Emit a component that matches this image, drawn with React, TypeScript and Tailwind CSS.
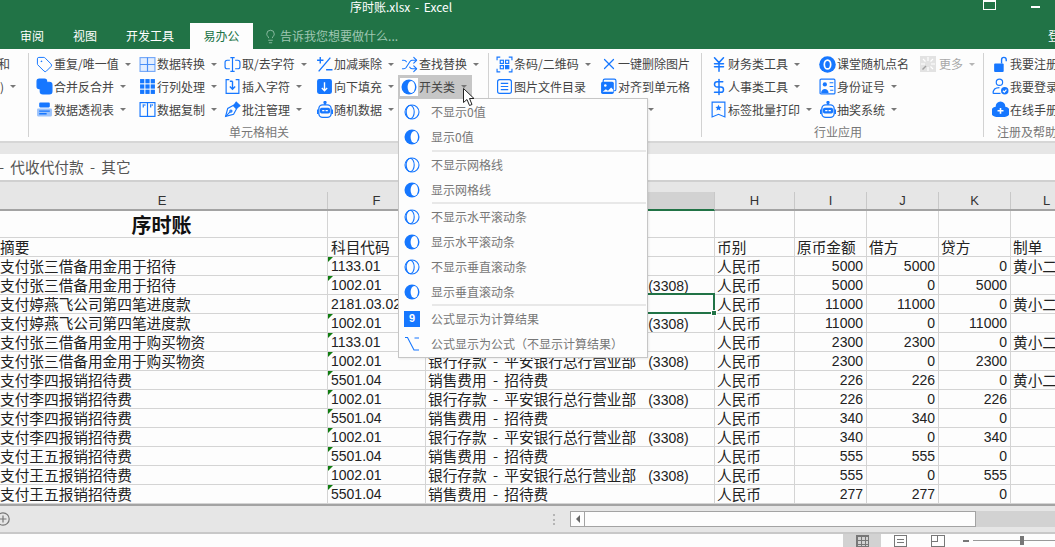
import type { ReactNode } from "react";
import { DollarSign, JapaneseYen, Lightbulb, Shuffle, Tag, X } from "lucide-react";

const blue = "#1677ff";

function Svg({ children }: { children: ReactNode }) {
  return (
    <svg width="17" height="17" viewBox="0 0 16 16" fill="none" stroke={blue} strokeWidth="1.1">
      {children}
    </svg>
  );
}

// switch icons used by the 开关类 button and its menu
const ToggleOn = () => (
  <svg width="16" height="16" viewBox="0 0 16 16">
    <circle cx="8" cy="8" r="7.5" fill={blue} />
    <ellipse cx="10.300" cy="8" rx="3.700" ry="6" fill="#fff" />
  </svg>
);
const ToggleOff = () => (
  <svg width="16" height="16" viewBox="0 0 16 16" fill="none" stroke={blue} strokeWidth="1.1">
    <circle cx="8" cy="8" r="7" />
    <ellipse cx="6.200" cy="8" rx="4" ry="6.700" />
  </svg>
);

const Robot = () => (
  <svg width="18" height="18" viewBox="0 0 16 16" fill="none" stroke={blue} strokeWidth="1.2">
    <circle cx="8" cy="1.400" r=".9" fill={blue} />
    <path d="M8 2v1.500M1.500 7.500v4M14.500 7.500v4" />
    <rect x="2.500" y="3.500" width="11" height="11" rx="3.500" />
    <rect x="3.500" y="6" width="9" height="5" rx="1.500" fill={blue} stroke="none" />
    <path d="M5.500 8.500h2M8.500 8.500h2" stroke="#fff" />
  </svg>
);

const icons: Record<string, ReactNode> = {
  tag: <Tag size={17} color={blue} strokeWidth={1.4} />,
  merge: (
    <Svg>
      <rect x="1" y="1" width="9" height="9" rx="2" fill={blue} />
      <rect x="4" y="4" width="11" height="11" rx="2.500" fill={blue} />
    </Svg>
  ),
  pivot: (
    <Svg>
      <rect x="3" y="1.500" width="10" height="4.500" rx="1" fill={blue} stroke="none" />
      <rect x="1" y="7" width="14" height="7.500" rx="1" fill="#9cc3fb" stroke="none" />
      <path d="M3 9.500h10M3 12h7" stroke={blue} strokeWidth="1.200" />
    </Svg>
  ),
  table: (
    <Svg>
      <rect x="1" y="1.500" width="14" height="13" fill="#e3eeff" stroke="#76a9f8" />
      <path d="M8 1.500v13M1 8h14" stroke="#4a8ff7" />
    </Svg>
  ),
  grid: (
    <Svg>
      {[1, 6, 11].flatMap((x) =>
        [1, 6, 11].map((y) => <rect key={`${x}-${y}`} x={x} y={y} width="4" height="4" fill={blue} stroke="none" />)
      )}
    </Svg>
  ),
  columns: (
    <Svg>
      <rect x="1" y="1.500" width="14" height="13" />
      <path d="M8 1.500v13M4 3v3M5.500 3v1.500M11 3v3M12.500 3v1.500" />
    </Svg>
  ),
  cursor: (
    <Svg>
      <path d="M6 1.500h4M6 14.500h4M8 1.500v13" />
      <path d="M5.500 4H3a2 2 0 0 0-2 2v4a2 2 0 0 0 2 2h2.500M10.500 4H13a2 2 0 0 1 2 2v4a2 2 0 0 1-2 2h-2.500" />
    </Svg>
  ),
  insert: (
    <Svg>
      <path d="M5 1.500H2v13h12v-13h-3" />
      <path d="M8 3v7M5.500 8 8 10.500 10.500 8M5.500 3H8" strokeWidth="1.300" />
    </Svg>
  ),
  pen: (
    <Svg>
      <path d="M9 4.500 11.500 1 15 4.500 11.500 7z" fill={blue} />
      <path d="M9 4 3.500 7 1.500 14.500 9 12.500l3-5.500z" />
      <path d="M1.500 14.500 6 10" />
      <circle cx="6.500" cy="9.500" r="1" />
    </Svg>
  ),
  calc: (
    <Svg>
      <path d="M1 4h6M4 1v6M13.500 1.500 2.500 14.500M9.500 13h6" strokeWidth="1.300" />
    </Svg>
  ),
  fill: (
    <Svg>
      <rect x="1" y="1" width="14" height="14" rx="2" fill={blue} stroke="none" />
      <path d="M8 4v8M5.500 9.500 8 12l2.500-2.500" stroke="#fff" strokeWidth="1.300" />
    </Svg>
  ),
  robot: <Robot />,
  shuffle: <Shuffle size={17} color={blue} strokeWidth={1.5} />,
  toggle: (
    <span className="-ml-[1px] flex h-[18px] w-[18px] items-center justify-center bg-white">
      <ToggleOn />
    </span>
  ),
  qr: (
    <Svg>
      <path d="M1 4V1h3M12 1h3v3M15 12v3h-3M4 15H1v-3" />
      <rect x="4" y="4" width="3" height="3" />
      <rect x="9" y="4" width="3" height="3" />
      <rect x="4" y="9" width="3" height="3" />
      <path d="M9 9h3v3H9z" fill={blue} />
    </Svg>
  ),
  list: (
    <Svg>
      <rect x="1.500" y="1.500" width="13" height="13" rx="2" />
      <path d="M4.500 5h7M4.500 8h7M4.500 11h7" />
    </Svg>
  ),
  x: <X size={18} color={blue} strokeWidth={1.6} />,
  image: (
    <Svg>
      <rect x="3" y="1" width="12" height="11" rx="1.500" />
      <rect x="1" y="3.500" width="12" height="11.500" rx="1.500" fill={blue} stroke="none" />
      <circle cx="5" cy="7" r="1.200" fill="#fff" stroke="none" />
      <path d="m2.500 13 3-2.500 2 1.500 3-3 2 2v2z" fill="#fff" stroke="none" />
    </Svg>
  ),
  yen: <JapaneseYen size={19} color={blue} strokeWidth={2} />,
  dollar: <DollarSign size={18} color={blue} strokeWidth={2} />,
  ribbon: (
    <Svg>
      <path d="M2 1h12v14l-6-2.500L2 15z" />
      <path d="m8 3.500.9 1.900 2 .2-1.500 1.400.4 2L8 8.100 6.200 9l.4-2-1.500-1.400 2-.2z" fill={blue} stroke="none" />
    </Svg>
  ),
  ring: (
    <svg width="17" height="17" viewBox="0 0 16 16">
      <circle cx="8" cy="8" r="7.800" fill={blue} />
      <ellipse cx="8" cy="8" rx="3" ry="4.200" fill="none" stroke="#fff" strokeWidth="1.600" />
    </svg>
  ),
  card: (
    <Svg>
      <rect x="1" y="1" width="14" height="14" rx="1" />
      <circle cx="5.500" cy="6" r="2" fill={blue} stroke="none" />
      <path d="M2 14c0-5 7-5 7 0z" fill={blue} stroke="none" />
      <path d="M10 4.500h3.500M10 8h3.500M10.500 11.500h3" />
    </Svg>
  ),
  more: (
    <svg width="16" height="16" viewBox="0 0 16 16" stroke="#fff" strokeWidth="1.200">
      <rect width="16" height="16" fill="#e2e2e2" stroke="none" />
      <path d="M8 1v4M8 11v4M1 8h4M11 8h4M3 3l2.500 2.500M13 3l-2.500 2.500M13 13l-2.500-2.500" />
      <path d="M2.500 13.500 6 10" stroke="#a0a0a0" strokeWidth="1.400" />
    </svg>
  ),
  lock: (
    <Svg>
      <rect x="2" y="7" width="9" height="8" rx="1" fill={blue} stroke="none" />
      <path d="M9 7V3.500a2.200 2.200 0 0 1 4.400 0V5" strokeWidth="1.300" />
    </Svg>
  ),
  user: (
    <Svg>
      <circle cx="7" cy="4" r="3" />
      <path d="M1 14.500c0-3.500 2.500-5.500 6-5.500" />
      <path d="M1 14.500h7" />
      <circle cx="12" cy="12" r="3.500" fill={blue} stroke="none" />
      <path d="m10.300 12 1.300 1.300 2-2.300" stroke="#fff" />
    </Svg>
  ),
  cloud: (
    <Svg>
      <path d="M8 .5a4.500 4.500 0 0 1 4.500 4.800A4.800 4.800 0 0 1 11.500 15h-7A4.800 4.800 0 0 1 3.500 5.300 4.500 4.500 0 0 1 8 .5z" fill={blue} stroke="none" />
      <path d="M8 6.500v5.500M5.200 9.200h5.600" stroke="#fff" strokeWidth="1.500" />
    </Svg>
  ),
};

function Caret({ color = "#777" }: { color?: string }) {
  return (
    <span
      className="ml-[6px] h-0 w-0 border-x-[3px] border-t-[3px] border-x-transparent"
      style={{ borderTopColor: color }}
    />
  );
}

function Tool({
  icon,
  label,
  caret,
  active,
  muted,
}: {
  icon: string;
  label: string;
  caret?: boolean;
  active?: boolean;
  muted?: boolean;
}) {
  return (
    <div
      className={`flex items-center whitespace-nowrap pl-[3px] text-[12px] ${
        active ? "w-[74px] bg-[#c6c6c6]" : ""
      } ${muted ? "text-[#a8a8a8]" : "text-[#444]"}`}
    >
      <span className="flex w-[18px] shrink-0 items-center justify-start">{icons[icon]}</span>
      <span className={muted ? "ml-[1px]" : ""}>{label}</span>
      {caret && <Caret color={muted ? "#b5b5b5" : "#777"} />}
    </div>
  );
}

type ToolDef = [string, string, boolean?];

function Group({
  width,
  left,
  cols,
  tools,
  label,
  labelLeft,
}: {
  width: string;
  left: string;
  cols: string;
  tools: ToolDef[];
  label: string;
  labelLeft: string;
}) {
  return (
    <div className={`flex h-full shrink-0 flex-col border-r border-[#d2d2d2] ${width} ${left}`}>
      <div className={`grid h-[68px] grid-flow-col grid-rows-[22px_23px_23px] ${cols}`}>
        {tools.map(([icon, text, caret]) => (
          <Tool
            key={text}
            icon={icon}
            label={text}
            caret={caret}
            active={icon === "toggle"}
            muted={icon === "more"}
          />
        ))}
      </div>
      <div className={`whitespace-nowrap pt-[3px] text-[12px] leading-[16px] text-[#777] ${labelLeft}`}>{label}</div>
    </div>
  );
}

const menuGroups: [string, string][][] = [
  [
    ["off", "不显示0值"],
    ["on", "显示0值"],
  ],
  [
    ["off", "不显示网格线"],
    ["on", "显示网格线"],
  ],
  [
    ["off", "不显示水平滚动条"],
    ["on", "显示水平滚动条"],
    ["off", "不显示垂直滚动条"],
    ["on", "显示垂直滚动条"],
  ],
  [
    ["nine", "公式显示为计算结果"],
    ["formula", "公式显示为公式（不显示计算结果）"],
  ],
];

function MenuIcon({ kind }: { kind: string }) {
  if (kind === "on") return <ToggleOn />;
  if (kind === "off") return <ToggleOff />;
  if (kind === "nine")
    return (
      <span className="flex h-[16px] w-[16px] items-center justify-center bg-[#1677ff] font-['Liberation_Sans',sans-serif] text-[11px] font-bold text-white">
        9
      </span>
    );
  return (
    <svg width="16" height="16" viewBox="0 0 16 16" fill="none" stroke={blue} strokeWidth="1.100">
      <path d="M1 1.500h2.500L10 14h5M10.500 2h4.500" />
    </svg>
  );
}

function SwitchMenu() {
  return (
    <div className="absolute left-[398px] top-[98px] h-[260px] w-[250px] border border-[#c6c6c6] bg-[#fdfdfd] text-[12px] text-[#777] shadow-[1px_1px_2px_rgba(0,0,0,0.08)]">
      {menuGroups.map((items, i) => (
        <div
          key={i}
          className={`${i > 0 ? "ml-[33px] mr-px border-t-2 border-[#e8e8e8]" : ""} ${i === 1 ? "mt-px" : ""}`}
        >
          {items.map(([kind, text]) => (
            <div key={text} className={`flex h-[25px] items-center whitespace-nowrap ${i > 0 ? "-ml-[33px]" : ""}`}>
              <span className="ml-[5px] flex w-[27px] shrink-0">
                <MenuIcon kind={kind} />
              </span>
              {text}
            </div>
          ))}
        </div>
      ))}
    </div>
  );
}

const colGrid = "grid grid-cols-[328px_98px_289px_80px_72px_72px_72px_72px]";
const headers = ["E", "F", "G", "H", "I", "J", "K", "L"];

const bank = "银行存款 - 平安银行总行营业部";
const sales = "销售费用 - 招待费";

type RowDef = [string, string, string, boolean, number, number, number, boolean];

const rows: RowDef[] = [
  ["支付张三借备用金用于招待", "1133.01", "其他应收款 - 张三", false, 5000, 5000, 0, true],
  ["支付张三借备用金用于招待", "1002.01", bank, true, 5000, 0, 5000, false],
  ["支付婷燕飞公司第四笔进度款", "2181.03.02", "", false, 11000, 11000, 0, true],
  ["支付婷燕飞公司第四笔进度款", "1002.01", bank, true, 11000, 0, 11000, false],
  ["支付张三借备用金用于购买物资", "1133.01", "其他应收款 - 张三", false, 2300, 2300, 0, true],
  ["支付张三借备用金用于购买物资", "1002.01", bank, true, 2300, 0, 2300, false],
  ["支付李四报销招待费", "5501.04", sales, false, 226, 226, 0, true],
  ["支付李四报销招待费", "1002.01", bank, true, 226, 0, 226, false],
  ["支付李四报销招待费", "5501.04", sales, false, 340, 340, 0, false],
  ["支付李四报销招待费", "1002.01", bank, true, 340, 0, 340, false],
  ["支付王五报销招待费", "5501.04", sales, false, 555, 555, 0, false],
  ["支付王五报销招待费", "1002.01", bank, true, 555, 0, 555, false],
  ["支付王五报销招待费", "5501.04", sales, false, 277, 277, 0, false],
];

const cell = "overflow-hidden whitespace-nowrap border-r border-b border-[#d4d4d4]";
const cjk = "text-[14.67px] leading-[18px]";
const latin = "font-['Liberation_Sans',sans-serif] text-[14px] leading-[18px]";

function Num({ value }: { value: number }) {
  return <div className={`${cell} ${latin} pr-[3px] text-right`}>{value}</div>;
}

function SheetRow({ row, index }: { row: RowDef; index: number }) {
  const [memo, code, account, suffix, amount, debit, credit, maker] = row;
  return (
    <div className={`${colGrid} h-[19px] text-[#222]`}>
      <div className={`${cell} ${cjk}`}>{memo}</div>
      <div className={`${cell} ${latin} relative pl-[3px]`}>
        {index !== 2 && (
          <span className="absolute left-0 top-0 h-0 w-0 border-r-[5px] border-t-[5px] border-r-transparent border-t-[#107c10]" />
        )}
        {code}
      </div>
      <div className={`${cell} ${cjk} ${index === 2 ? "relative overflow-visible" : ""} pl-[2px] [word-spacing:3px]`}>
        {account}
        {suffix && <span className={`${latin} ml-[12px]`}>(3308)</span>}
        {index === 2 && (
          <>
            <span className="absolute -left-px -top-[2px] bottom-[-1px] right-[-1px] border-2 border-[#217346]" />
            <span className="absolute bottom-[-3px] right-[-3px] h-[6px] w-[6px] border border-white bg-[#217346]" />
          </>
        )}
      </div>
      <div className={`${cell} ${cjk} pl-[2px]`}>人民币</div>
      <Num value={amount} />
      <Num value={debit} />
      <Num value={credit} />
      <div className={`${cell} ${cjk} pl-[2px]`}>{maker ? "黄小二" : ""}</div>
    </div>
  );
}

export default function App() {
  return (
    <div className="relative h-[547px] w-[1055px] overflow-hidden bg-[#fdfdfd] font-['Noto_Sans_CJK_SC',sans-serif]">
      {/* Title bar + tabs */}
      <div className="h-[49px] bg-[#217346] text-[12px] text-white">
        <div className="flex h-[23px]">
          <div className="ml-[350px] w-[103px] whitespace-nowrap leading-[14px] [word-spacing:2px]">序时账.xlsx - Excel</div>
          <div className="ml-[530px] h-[10px] w-[13px] border border-t-2 border-white" />
          <div className="ml-[35px] mt-[6px] h-[2px] w-[9px] bg-white" />
        </div>
        <div className="flex h-[26px] items-center">
          <div className="ml-[20px]">审阅</div>
          <div className="ml-[29px]">视图</div>
          <div className="ml-[29px]">开发工具</div>
          <div className="ml-[16px] flex h-full w-[63px] items-center justify-center bg-[#fdfdfd] text-[#217346]">
            易办公
          </div>
          <div className="ml-[10px] flex items-center text-[#9fc7b2]">
            <Lightbulb size={15} strokeWidth={1.3} />
            <span className="ml-[2px]">告诉我您想要做什么...</span>
          </div>
          <div className="ml-auto w-[7px] overflow-hidden whitespace-nowrap">登录</div>
        </div>
      </div>

      {/* Ribbon */}
      <div className="flex h-[94px] overflow-hidden border-b-2 border-[#d6d6d6] bg-[#fdfdfd] py-[4px]">
        <div className="h-full w-[29px] shrink-0 overflow-hidden border-r border-[#d2d2d2] text-[12px] text-[#444]">
          <div className="flex h-[22px] items-center justify-end whitespace-nowrap pr-[18px]">求和</div>
          <div className="flex h-[23px] items-center justify-end whitespace-nowrap pr-[12px]">
            表)
            <Caret />
          </div>
        </div>
        <Group
          width="w-[460px]"
          left="pl-[4px]"
          cols="grid-cols-[103px_85px_92px_85px_74px]"
          label="单元格相关"
          labelLeft="pl-[196px]"
          tools={[
            ["tag", "重复/唯一值", true],
            ["merge", "合并反合并", true],
            ["pivot", "数据透视表", true],
            ["table", "数据转换", true],
            ["grid", "行列处理", true],
            ["columns", "数据复制", true],
            ["cursor", "取/去字符", true],
            ["insert", "插入字符", true],
            ["pen", "批注管理", true],
            ["calc", "加减乘除", true],
            ["fill", "向下填充", true],
            ["robot", "随机数据", true],
            ["shuffle", "查找替换", true],
            ["toggle", "开关类", true],
          ]}
        />
        <Group
          width="w-[213px]"
          left="pl-[4px]"
          cols="grid-cols-[104px_104px]"
          label=""
          labelLeft=""
          tools={[
            ["qr", "条码/二维码", true],
            ["list", "图片文件目录"],
            ["list", "批量导入图片"],
            ["x", "一键删除图片"],
            ["image", "对齐到单元格"],
            ["image", "图片", true],
          ]}
        />
        <Group
          width="w-[282px]"
          left="pl-[5px]"
          cols="grid-cols-[109px_101px_70px]"
          label="行业应用"
          labelLeft="pl-[107px]"
          tools={[
            ["yen", "财务类工具", true],
            ["dollar", "人事类工具", true],
            ["ribbon", "标签批量打印", true],
            ["ring", "课堂随机点名"],
            ["card", "身份证号", true],
            ["robot", "抽奖系统", true],
            ["more", "更多", true],
          ]}
        />
        <div className="w-[72px] shrink-0 pl-[5px]">
          <div className="grid h-[68px] grid-rows-[22px_23px_23px]">
            <Tool icon="lock" label="我要注册" />
            <Tool icon="user" label="我要登录" />
            <Tool icon="cloud" label="在线手册" />
          </div>
          <div className="whitespace-nowrap pl-[8px] pt-[3px] text-[12px] leading-[16px] text-[#777]">注册及帮助</div>
        </div>
      </div>

      {/* Formula bar */}
      <div className="h-[11px] bg-[#e6e6e6]" />
      <div className="h-[28px] border-b-2 border-[#d0d0d0] bg-[#fdfdfd] -indent-[1px] text-[14.67px] leading-[26px] text-[#555] [word-spacing:3px]">
        - 代收代付款 - 其它
      </div>
      <div className="h-[10px] bg-[#e6e6e6]" />

      {/* Column letters */}
      <div className={`${colGrid} h-[19px] border-b-2 border-[#a3a3a3] bg-[#e6e6e6]`}>
        {headers.map((h) => (
          <div
            key={h}
            className={`border-r border-[#c8c8c8] text-center font-['Liberation_Sans',sans-serif] text-[13px] leading-[17px] text-[#333] ${
              h === "G" ? "-mb-[2px] border-b-2 border-b-[#217346] bg-[#d2d2d2]" : ""
            } ${h === "E" ? "pr-[3px]" : ""}`}
          >
            {h}
          </div>
        ))}
      </div>

      {/* Sheet */}
      <div className={`${colGrid} h-[27px]`}>
        <div className={`${cell} pr-[4px] text-center text-[20px] font-bold leading-[27px] text-[#111]`}>序时账</div>
        {headers.slice(1).map((h) => (
          <div key={h} className={cell} />
        ))}
      </div>
      <div className={`${colGrid} h-[19px] text-[#222]`}>
        {["摘要", "科目代码", "科目名称", "币别", "原币金额", "借方", "贷方", "制单"].map((h, i) => (
          <div key={h} className={`${cell} ${cjk} ${i === 0 ? "" : i === 1 ? "pl-[3px]" : "pl-[2px]"}`}>
            {h}
          </div>
        ))}
      </div>
      {rows.map((row, i) => (
        <SheetRow key={i} row={row} index={i} />
      ))}

      {/* Sheet tabs + scrollbar */}
      <div className="flex h-[30px] items-center border-y-2 border-t-[#a3a3a3] border-b-[#c8c8c8] bg-[#e6e6e6]">
        <svg className="-ml-[4px]" width="14" height="14" viewBox="0 0 14 14" fill="none" stroke="#777" strokeWidth="1.200">
          <circle cx="7" cy="7" r="6.200" />
          <path d="M3.500 7h7M7 3.500v7" />
        </svg>
        <div className="ml-[543px] h-[11px] w-[2px] border-l-2 border-dotted border-[#b5b5b5]" />
        <div className="ml-[15px] flex h-[16px] flex-1 items-stretch bg-[#d2d2d2]">
          <div className="flex w-[14px] items-center justify-center border border-r-0 border-[#a3a3a3] bg-[#fdfdfd]">
            <span className="h-0 w-0 border-y-[4px] border-r-[4px] border-y-transparent border-r-[#666]" />
          </div>
          <div className="w-[392px] border border-[#a3a3a3] bg-[#fdfdfd]" />
        </div>
      </div>

      {/* Status bar */}
      <div className="flex h-[13px] items-center bg-[#fdfdfd]">
        <div className="ml-[843px] flex h-full w-[38px] items-center justify-center bg-[#d2d2d2]">
          <div className="h-[12px] w-[13px] border border-[#777] bg-[linear-gradient(#777_1px,transparent_1px),linear-gradient(90deg,#777_1px,transparent_1px)] bg-[size:4px_4px]" />
        </div>
        <div className="flex w-[38px] justify-center">
          <div className="h-[12px] w-[13px] border border-[#777] bg-[linear-gradient(#777_1px,transparent_1px)] bg-[size:100%_3px] bg-clip-content p-[2px]" />
        </div>
        <div className="flex w-[38px] justify-center">
          <div className="flex h-[12px] w-[14px] border border-[#777]">
            <div className="h-[6px] w-[6px] border-r border-b border-[#777]" />
          </div>
        </div>
        <div className="ml-[6px] h-[2px] w-[6px] bg-[#777]" />
        <div className="relative ml-[4px] h-px flex-1 bg-[#999]">
          <div className="absolute left-[47px] top-[-4px] h-[9px] w-[4px] bg-[#777]" />
        </div>
      </div>

      <SwitchMenu />

      {/* Mouse pointer */}
      <svg className="absolute left-[463px] top-[88px]" width="13" height="19" viewBox="0 0 13 19">
        <path d="M.5.500v14l3.500-3 2.500 6 2.500-1-2.500-6H11z" fill="#fff" stroke="#222" strokeWidth="1" />
      </svg>
    </div>
  );
}
